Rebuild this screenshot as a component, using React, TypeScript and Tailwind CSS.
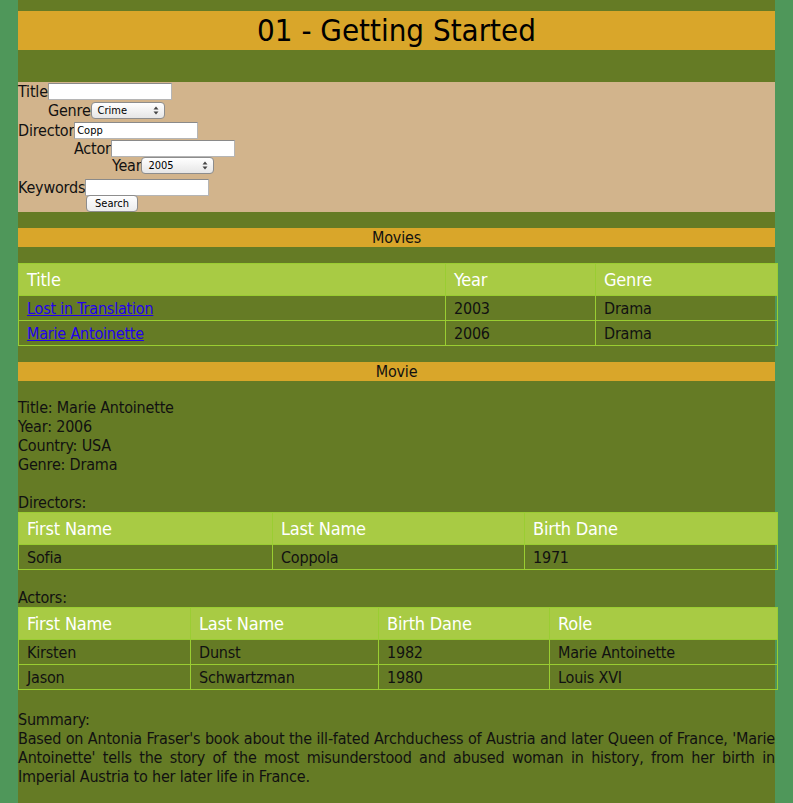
import React from "react";

const font = { fontFamily: '"DejaVu Sans Condensed", "DejaVu Sans", sans-serif' };

function Select({ value, w }: { value: string; w: string }) {
  return (
    <span
      className={`inline-flex items-center justify-between h-[17px] ${w} rounded-[4px] border border-[#8d8d8d] bg-gradient-to-b from-white to-[#e6e6e6] pl-[6px] pr-[5px] text-[11px] leading-[15px] text-black tracking-normal`}
    >
      <span>{value}</span>
      <svg width="6" height="9" viewBox="0 0 6 9">
        <path d="M3 0.5 L5.5 3.5 H0.5 Z" fill="#444" />
        <path d="M3 8.5 L5.5 5.5 H0.5 Z" fill="#444" />
      </svg>
    </span>
  );
}

function Input({ value = "", w = "w-[124px]" }: { value?: string; w?: string }) {
  return (
    <span
      className={`inline-block h-[17px] ${w} bg-white border border-[#b5b5b5] border-t-[#8a8a8a] border-l-[#9a9a9a] text-[11px] leading-[15px] pl-[2px] text-black tracking-normal`}
    >
      {value}
    </span>
  );
}

function Band({ children }: { children: React.ReactNode }) {
  return (
    <div className="bg-[#d9a62a] h-[19px] text-center text-[16px] leading-[19px] text-[#111]">
      {children}
    </div>
  );
}

function DataTable({
  headers,
  widths,
  rows,
}: {
  headers: string[];
  widths: string[];
  rows: React.ReactNode[][];
}) {
  return (
    <table className="w-full border-collapse table-fixed">
      <colgroup>
        {widths.map((w, i) => (
          <col key={i} className={w} />
        ))}
      </colgroup>
      <thead>
        <tr className="bg-[#a8cb44]">
          {headers.map((h) => (
            <th
              key={h}
              className="border border-[#9acd32] text-left font-normal text-white text-[18px] leading-[22px] h-[32px] px-[8px] py-0"
            >
              {h}
            </th>
          ))}
        </tr>
      </thead>
      <tbody>
        {rows.map((r, i) => (
          <tr key={i}>
            {r.map((c, j) => (
              <td
                key={j}
                className="border border-[#9acd32] text-left text-[16px] leading-[19px] h-[25px] px-[8px] pt-[1px] pb-0 text-[#111]"
              >
                {c}
              </td>
            ))}
          </tr>
        ))}
      </tbody>
    </table>
  );
}

export default function App() {
  return (
    <div className="min-h-[803px] bg-[#4f975a] px-[18px]" style={font}>
      <div className="bg-[#657b25] min-h-[803px] pt-[11px] pb-[18px] text-[#111] text-[16px] leading-[19px] tracking-[-0.2px]">
        <div className="bg-[#d9a62a] h-[39px] text-center text-[31px] leading-[39px] text-black tracking-normal">
          01 - Getting Started
        </div>
        <div className="mt-[32px] bg-[#d2b48c] h-[130px]">
          <div className="flex items-center h-[18px]">
            <span>Title</span>
            <Input />
          </div>
          <div className="flex items-center h-[20px] pl-[30px]">
            <span>Genre</span>
            <Select value="Crime" w="w-[74px]" />
          </div>
          <div className="flex items-center h-[20px]">
            <span>Director</span>
            <Input value="Copp" />
          </div>
          <div className="flex items-center h-[16px] pl-[56px]">
            <span>Actor</span>
            <Input />
          </div>
          <div className="flex items-center h-[18px] pl-[94px]">
            <span>Year</span>
            <Select value="2005" w="w-[73px]" />
          </div>
          <div className="flex items-center h-[18px] mt-[4px]">
            <span>Keywords</span>
            <Input />
          </div>
          <div className="flex items-center h-[14px] pl-[68px]">
            <span className="inline-flex items-center justify-center w-[52px] h-[17px] rounded-[4px] border border-[#8d8d8d] bg-gradient-to-b from-white to-[#ececec] text-[11px] leading-[15px] text-black tracking-normal">
              Search
            </span>
          </div>
        </div>

        <div className="mt-[16px]">
          <Band>Movies</Band>
        </div>
        <div className="mt-[16px]">
          <DataTable
            headers={["Title", "Year", "Genre"]}
            widths={["w-[427px]", "w-[150px]", "w-[182px]"]}
            rows={[
              [
                <a href="#" className="text-[#2200ee] underline">Lost in Translation</a>,
                "2003",
                "Drama",
              ],
              [
                <a href="#" className="text-[#2200ee] underline">Marie Antoinette</a>,
                "2006",
                "Drama",
              ],
            ]}
          />
        </div>

        <div className="mt-[16px]">
          <Band>Movie</Band>
        </div>
        <div className="mt-[17px]">
          <div>Title: Marie Antoinette</div>
          <div>Year: 2006</div>
          <div>Country: USA</div>
          <div>Genre: Drama</div>
          <div className="mt-[19px]">Directors:</div>
          <DataTable
            headers={["First Name", "Last Name", "Birth Dane"]}
            widths={["w-[254px]", "w-[252px]", "w-[253px]"]}
            rows={[["Sofia", "Coppola", "1971"]]}
          />
          <div className="mt-[18px]">Actors:</div>
          <DataTable
            headers={["First Name", "Last Name", "Birth Dane", "Role"]}
            widths={["w-[172px]", "w-[188px]", "w-[171px]", "w-[228px]"]}
            rows={[
              ["Kirsten", "Dunst", "1982", "Marie Antoinette"],
              ["Jason", "Schwartzman", "1980", "Louis XVI"],
            ]}
          />
          <div className="mt-[20px]">Summary:</div>
          <p className="text-justify">
            <span className="block [text-align-last:justify] whitespace-nowrap">
              Based on Antonia Fraser's book about the ill-fated Archduchess of Austria and later Queen of France, 'Marie
            </span>
            <span className="block [text-align-last:justify] whitespace-nowrap">
              Antoinette' tells the story of the most misunderstood and abused woman in history, from her birth in
            </span>
            <span className="block">Imperial Austria to her later life in France.</span>
          </p>
        </div>
      </div>
    </div>
  );
}
